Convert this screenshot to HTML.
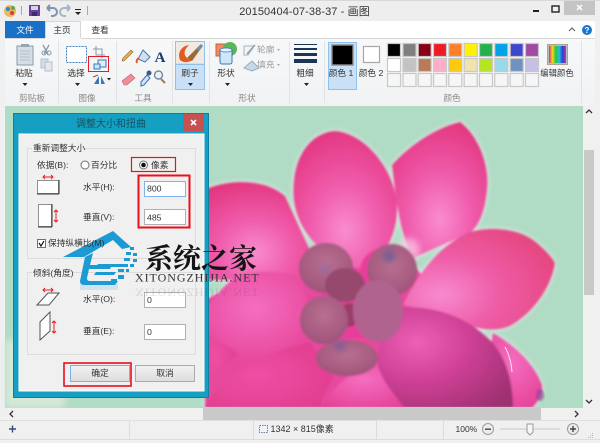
<!DOCTYPE html>
<html lang="zh"><head><meta charset="utf-8"><title>画图</title>
<style>
html,body{margin:0;padding:0;width:600px;height:443px;overflow:hidden;background:#f0f0f0}
svg{display:block;filter:blur(.3px)}
text{font-family:"Liberation Sans","Noto Sans CJK SC",sans-serif;font-size:8.7px;fill:#333}
.m{text-anchor:middle}
.g{fill:#8a8a8a}
.d{fill:#9a9a9a}
</style></head><body>
<svg width="600" height="443" viewBox="0 0 600 443" xmlns="http://www.w3.org/2000/svg">
<defs>
<radialGradient id="pA" cx=".5" cy=".72" r=".75"><stop offset="0" stop-color="#f98ccf"/><stop offset=".45" stop-color="#f05cac"/><stop offset="1" stop-color="#e2367f"/></radialGradient>
<radialGradient id="pB" cx=".25" cy=".65" r=".85"><stop offset="0" stop-color="#f88ad0"/><stop offset=".45" stop-color="#ee5ca6"/><stop offset="1" stop-color="#e4447c"/></radialGradient>
<radialGradient id="pC" cx=".4" cy=".5" r=".7"><stop offset="0" stop-color="#ee4fa4"/><stop offset="1" stop-color="#e03c8e"/></radialGradient>
<radialGradient id="pD" cx=".3" cy=".35" r=".85"><stop offset="0" stop-color="#ec60b6"/><stop offset=".45" stop-color="#cf4096"/><stop offset="1" stop-color="#9c3070"/></radialGradient>
<radialGradient id="pE" cx=".5" cy=".4" r=".8"><stop offset="0" stop-color="#f56ec0"/><stop offset="1" stop-color="#e23b90"/></radialGradient>
<radialGradient id="bud" cx=".5" cy=".4" r=".7"><stop offset="0" stop-color="#b8708f"/><stop offset="1" stop-color="#9c4f78"/></radialGradient>
<linearGradient id="rib" x1="0" y1="0" x2="0" y2="1"><stop offset="0" stop-color="#f7f8f9"/><stop offset="1" stop-color="#f1f2f3"/></linearGradient>
<linearGradient id="btn" x1="0" y1="0" x2="0" y2="1"><stop offset="0" stop-color="#f2f2f2"/><stop offset="1" stop-color="#dcdcdc"/></linearGradient>
<linearGradient id="rb" x1="0" y1="0" x2="1" y2="0"><stop offset="0" stop-color="#e0208c"/><stop offset=".2" stop-color="#e8e020"/><stop offset=".4" stop-color="#30c040"/><stop offset=".6" stop-color="#20c0e0"/><stop offset=".8" stop-color="#3040d0"/><stop offset="1" stop-color="#c030b0"/></linearGradient>
<filter id="glow" x="-20%" y="-20%" width="140%" height="140%"><feGaussianBlur in="SourceAlpha" stdDeviation="2.6"/><feColorMatrix values="0 0 0 0 .93 0 0 0 0 .96 0 0 0 0 .94 0 0 0 .9 0"/></filter>
<filter id="soft" x="-10%" y="-10%" width="120%" height="120%"><feGaussianBlur stdDeviation="1"/></filter>
<filter id="spot" x="-60%" y="-60%" width="220%" height="220%"><feGaussianBlur stdDeviation="3.5"/></filter>
<g id="petals">
<path fill="#e7489c" d="M205 408L205 300L300 250L400 250L470 330L500 408Z"/>
<path fill="url(#pE)" d="M493 333C515 345 535 365 542 385C543 395 538 402 532 408L480 408Z"/>
<path fill="url(#pA)" d="M200 192C225 178 265 178 285 196C294 215 303 235 310 250L300 280L200 280Z"/>
<path fill="url(#pA)" d="M392 165C410 145 435 128 460 122C478 135 490 165 487 190C485 210 480 225 470 233L413 258C400 235 396 200 392 165Z"/>
<path fill="url(#pA)" d="M340 265C305 240 290 215 294 180C297 150 315 132 335 131C365 133 395 170 397 205C398 230 388 250 372 270Z"/>
<path fill="url(#pB)" d="M403 305C420 270 440 245 470 232C490 226 520 228 537 243C545 250 552 257 555 263C552 285 535 312 510 326C490 334 470 328 445 314Z"/>
<path fill="url(#pE)" d="M200 355C225 372 290 360 310 338L304 280C285 270 262 270 240 275C220 285 210 305 200 318Z"/>
<path fill="url(#pC)" d="M205 408C212 385 250 355 310 342L334 378C325 392 320 400 322 408Z"/>
<path fill="url(#pE)" d="M322 408C330 390 350 370 378 360L405 408Z"/>
<path fill="url(#pC)" d="M200 320L210 335C225 345 235 350 238 355C220 365 205 380 200 395Z"/>
<path fill="url(#pD)" d="M377 362C378 340 388 316 403 308C430 305 465 315 490 340C505 355 513 380 513 408L405 408C392 392 380 378 377 362Z"/>
</g>
</defs>

<rect width="600" height="443" fill="#f0f0f0"/>
<!-- canvas -->
<rect x="5" y="106" width="578" height="302" fill="#b0dbc4"/>
<rect x="5" y="340" width="60" height="68" fill="#d5e8d8" filter="url(#spot)"/>
<clipPath id="cv"><rect x="5" y="107" width="577" height="300"/></clipPath>
<g clip-path="url(#cv)">
<use href="#petals" filter="url(#glow)"/>
<use href="#petals" filter="url(#soft)"/>
<path d="M505 347Q511 358 512 372" stroke="#f4e8ee" stroke-width="1" fill="none"/>
<ellipse cx="540" cy="395" rx="4" ry="6" fill="#8c4a9c" opacity=".7" filter="url(#soft)"/>
<circle cx="408" cy="250" r="12" fill="#fbd0ea" opacity=".7" filter="url(#spot)"/>
<g filter="url(#soft)">
<rect x="322" y="278" width="66" height="60" fill="#e83d9a"/>
<ellipse cx="349" cy="315" rx="9" ry="12" fill="#9a3c68"/>
<ellipse cx="326" cy="268" rx="27" ry="25" fill="url(#bud)"/>
<ellipse cx="384" cy="272" rx="24" ry="24" fill="#e83d9a"/>
<ellipse cx="392" cy="270" rx="25" ry="26" fill="url(#bud)"/>
<ellipse cx="345" cy="285" rx="20" ry="17" fill="#96486d"/>
<ellipse cx="324" cy="320" rx="24" ry="24" fill="url(#bud)"/>
<ellipse cx="378" cy="311" rx="25" ry="31" fill="#b0648f"/>
<ellipse cx="347" cy="358" rx="31" ry="18" fill="url(#bud)"/>
</g>
<circle cx="389" cy="256" r="6" fill="#5d5a98" opacity=".8" filter="url(#spot)"/>
<circle cx="325" cy="269" r="5" fill="#8a6aa8" opacity=".7" filter="url(#spot)"/>
<circle cx="340" cy="346" r="5" fill="#6a5a9c" opacity=".8" filter="url(#spot)"/>
</g>

<!-- title bar -->
<rect width="600" height="21" fill="#eeeeee"/>
<rect y="0" width="600" height="1" fill="#d8d8d8"/>
<circle cx="10" cy="11" r="6" fill="#e8b860"/><circle cx="8" cy="9" r="2" fill="#3a80c8"/><circle cx="12" cy="13" r="2" fill="#d04040"/><circle cx="13" cy="8" r="2" fill="#60a850"/>
<rect x="21" y="6" width="1" height="9" fill="#a8a8a8"/>
<rect x="29" y="5" width="11" height="11" fill="#6a3f9f"/><rect x="31" y="6" width="7" height="4" fill="#d8d0e8"/><rect x="32" y="12" width="5" height="4" fill="#3c2a70"/>
<path d="M47 8h6a4 4 0 0 1 0 8h-2M47 8l3-3M47 8l3 3" stroke="#7c93b4" stroke-width="2" fill="none"/>
<path d="M70 8h-6a4 4 0 0 0 0 8h2M70 8l-3-3M70 8l-3 3" stroke="#a6b4c6" stroke-width="2" fill="none"/>
<rect x="75" y="9" width="6" height="1" fill="#222"/><path d="M75 12h6l-3 3z" fill="#222"/>
<rect x="87" y="6" width="1" height="9" fill="#a8a8a8"/>
<text x="304.500" y="15" class="m" style="font-size:11px;letter-spacing:.1px">20150404-07-38-37 - 画图</text>
<rect x="533" y="10" width="6" height="2" fill="#222"/>
<rect x="552" y="6" width="7" height="6" fill="none" stroke="#222" stroke-width="1.4"/>
<rect x="564" y="1" width="31" height="14" fill="#c4c4c4"/>
<path d="M577 5l5 5M582 5l-5 5" stroke="#fff" stroke-width="1.5"/>

<!-- tabs -->
<rect x="5" y="21" width="590" height="17" fill="#fff"/>
<rect x="5" y="21" width="40" height="17" fill="#1a6fc7"/>
<text x="25" y="33" class="m" style="fill:#fff">文件</text>
<rect x="45.500" y="21.500" width="35" height="17" fill="#f6f7f8" stroke="#d6d6d6"/>
<text x="62" y="33" class="m">主页</text>
<text x="100" y="33" class="m">查看</text>
<path d="M569 31l3-3 3 3" stroke="#666" stroke-width="1.2" fill="none"/>
<circle cx="587" cy="30" r="5" fill="#1a74d2"/><text x="587" y="33" class="m" style="fill:#fff;font-size:8px;font-weight:bold">?</text>

<!-- ribbon -->
<rect x="5" y="38" width="590" height="68" fill="url(#rib)"/>
<rect x="5" y="38" width="40" height="1" fill="#d6d6d6"/><rect x="81" y="38" width="514" height="1" fill="#d6d6d6"/>
<g fill="#e2e3e4">
<rect x="58" y="41" width="1" height="62"/><rect x="116" y="41" width="1" height="62"/><rect x="172" y="41" width="1" height="62"/><rect x="209" y="41" width="1" height="62"/><rect x="289" y="41" width="1" height="62"/><rect x="324" y="41" width="1" height="62"/><rect x="581" y="41" width="1" height="62"/>
</g>
<!-- clipboard -->
<rect x="17" y="46" width="16" height="19" fill="#d5dde6" stroke="#8a9aa8"/><rect x="21" y="44" width="8" height="3" fill="#9aa5af"/>
<path d="M20 51h10M20 54h10M20 57h10M20 60h10" stroke="#b4c0cc"/>
<text x="24" y="76" class="m">粘贴</text><path d="M22.500 83h5l-2.500 3z" fill="#222"/>
<path d="M43 45l5 9M49 45l-5 9" stroke="#8a9aa8" stroke-width="1.3"/><circle cx="44" cy="53" r="2" fill="none" stroke="#8a9aa8"/><circle cx="49" cy="53" r="2" fill="none" stroke="#8a9aa8"/>
<rect x="41" y="59" width="7" height="9" fill="#d5dde6" stroke="#b4c0cc"/><rect x="45" y="62" width="7" height="9" fill="#e2e8ee" stroke="#b4c0cc"/>
<text x="32" y="101" class="m g">剪贴板</text>
<!-- select -->
<rect x="66.500" y="46.500" width="20" height="16" fill="#fff" stroke="#4a80b8" stroke-dasharray="2 1"/>
<text x="76" y="76" class="m">选择</text><path d="M75 83h5l-2.500 3z" fill="#222"/>
<path d="M96 46v9h9M93 49h9v9" stroke="#8a9aa8" fill="none"/>
<rect x="88.500" y="56.500" width="20" height="15" fill="none" stroke="#e81c24"/>
<rect x="98" y="60" width="8" height="7" fill="#e0ecf8" stroke="#3a78b8"/><rect x="94" y="64" width="6" height="5" fill="#cfe2f6" stroke="#3a78b8"/>
<path d="M94 84l5-8v8zM101 84v-8l4 8z" fill="#3a78b8"/><path d="M93 77l5-2" stroke="#c04030"/><path d="M107 78h4l-2 2.500z" fill="#222"/>
<text x="87" y="101" class="m g">图像</text>
<!-- tools -->
<path d="M124 61l-2 0 1-3 8-8 2 2z" fill="#e8b040" stroke="#8a6a30" stroke-width=".6"/>
<path d="M143 50l7 7-5 5-7-3z" fill="#cfe0f0" stroke="#4a7ab0"/><path d="M139 58c-2 1-3 3-2 5" stroke="#e05a28" stroke-width="2" fill="none"/>
<text x="160" y="62" class="m" style="font-family:'Liberation Serif',serif;font-size:15px;font-weight:bold;fill:#1c3a68">A</text>
<path d="M122 81l9-7 4 4-8 7h-3z" fill="#ee8f96" stroke="#c06870" stroke-width=".6"/>
<path d="M141 82l6-7 3 3-6 7-3 1z" fill="#cfe4f6" stroke="#3a70a8"/><circle cx="149" cy="73" r="2.500" fill="#3a5a90"/>
<circle cx="158.500" cy="75" r="4" fill="#e8f0f8" stroke="#6a7a8a" stroke-width="1.2"/><path d="M161 79l4 4" stroke="#a08050" stroke-width="2"/>
<text x="143" y="101" class="m g">工具</text>
<!-- brush -->
<rect x="175.500" y="41.500" width="29" height="48" fill="#c9e0f7" stroke="#90c0ec"/>
<rect x="176" y="42" width="28" height="21" fill="#efeae4"/><rect x="176" y="64" width="28" height="1" fill="#90c0ec"/>
<path d="M180 60c-3-8 2-14 9-15-4 4-6 8-3 12 3 4 6 2 8 1-2 4-10 6-14 2z" fill="#e35a24"/>
<path d="M187 58l13-13 2 2-10 14z" fill="#9a6a38"/><path d="M196 49l5-5 2 2-4 5z" fill="#7a8a98"/>
<text x="190" y="76" class="m">刷子</text><path d="M188 83h5l-2.500 3z" fill="#222"/>
<!-- shapes -->
<rect x="216" y="44" width="13" height="12" fill="#f08a60" stroke="#c86040"/><circle cx="230" cy="49" r="7" fill="#58b858"/>
<rect x="220" y="49" width="12" height="15" rx="2" fill="#cfe6fa" stroke="#3a78b8"/><ellipse cx="226" cy="50" rx="6" ry="2" fill="#e9f4fd" stroke="#3a78b8" stroke-width=".7"/>
<text x="226" y="76" class="m">形状</text><path d="M225 83h5l-2.500 3z" fill="#222"/>
<path d="M244 46h9v2l-5 7-4 0v-9z" fill="#f2f4f6" stroke="#a6b4c2"/><path d="M247 54l8-9" stroke="#8aa0b4" stroke-width="1.5"/>
<text x="257" y="52.500" class="d">轮廓</text><path d="M277 49h3l-1.500 2z" fill="#aaa"/>
<path d="M244 68l8-7 7 7-7 3z" fill="#c5d8e8" stroke="#9aacbd"/>
<text x="257" y="67.500" class="d">填充</text><path d="M277 64h3l-1.500 2z" fill="#aaa"/>
<text x="247" y="101" class="m g">形状</text>
<!-- size -->
<g fill="#1c3557"><rect x="294" y="44" width="23" height="1"/><rect x="294" y="48" width="23" height="2"/><rect x="294" y="53" width="23" height="3"/><rect x="294" y="59" width="23" height="4"/></g>
<text x="305" y="76" class="m">粗细</text><path d="M304 83h5l-2.500 3z" fill="#222"/>
<!-- colors -->
<rect x="328.500" y="42.500" width="28" height="47" fill="#c9e0f7" stroke="#90c0ec"/>
<rect x="332" y="45" width="21" height="20" fill="#000" stroke="#8c8c8c" stroke-width="1.4"/>
<text x="341" y="76" class="m">颜色 1</text>
<rect x="363.500" y="46.500" width="16" height="16" fill="#fff" stroke="#a8a8a8" stroke-width="1.200"/>
<text x="371" y="76" class="m">颜色 2</text>
<g stroke="#c8c8c8" stroke-width="1.200">
<rect x="387.500" y="43.500" width="13" height="13" fill="#000"/><rect x="403" y="43.500" width="13" height="13" fill="#7f7f7f"/><rect x="418.200" y="43.500" width="13" height="13" fill="#880015"/><rect x="433.500" y="43.500" width="13" height="13" fill="#ed1c24"/><rect x="448.800" y="43.500" width="13" height="13" fill="#ff7f27"/><rect x="464.200" y="43.500" width="13" height="13" fill="#fff200"/><rect x="479.500" y="43.500" width="13" height="13" fill="#22b14c"/><rect x="494.800" y="43.500" width="13" height="13" fill="#00a2e8"/><rect x="510.200" y="43.500" width="13" height="13" fill="#3f48cc"/><rect x="525.500" y="43.500" width="13" height="13" fill="#a349a4"/>
<rect x="387.500" y="58.500" width="13" height="13" fill="#fff"/><rect x="403" y="58.500" width="13" height="13" fill="#c3c3c3"/><rect x="418.200" y="58.500" width="13" height="13" fill="#b97a57"/><rect x="433.500" y="58.500" width="13" height="13" fill="#ffaec9"/><rect x="448.800" y="58.500" width="13" height="13" fill="#ffc90e"/><rect x="464.200" y="58.500" width="13" height="13" fill="#efe4b0"/><rect x="479.500" y="58.500" width="13" height="13" fill="#b5e61d"/><rect x="494.800" y="58.500" width="13" height="13" fill="#99d9ea"/><rect x="510.200" y="58.500" width="13" height="13" fill="#7092be"/><rect x="525.500" y="58.500" width="13" height="13" fill="#c8bfe7"/>
<g fill="#f6f6f6"><rect x="387.500" y="73.500" width="13" height="13"/><rect x="403" y="73.500" width="13" height="13"/><rect x="418.200" y="73.500" width="13" height="13"/><rect x="433.500" y="73.500" width="13" height="13"/><rect x="448.800" y="73.500" width="13" height="13"/><rect x="464.200" y="73.500" width="13" height="13"/><rect x="479.500" y="73.500" width="13" height="13"/><rect x="494.800" y="73.500" width="13" height="13"/><rect x="510.200" y="73.500" width="13" height="13"/><rect x="525.500" y="73.500" width="13" height="13"/></g>
</g>
<rect x="547.500" y="44.500" width="20" height="20" fill="#bdbdbd" stroke="#b0a090"/><rect x="549" y="46" width="17" height="17" fill="url(#rb)"/>
<text x="557" y="76" class="m" style="font-size:8.400px">编辑颜色</text>
<text x="452" y="101" class="m g">颜色</text>

<!-- scrollbars -->
<rect x="583" y="106" width="12" height="314" fill="#f0f0f0"/>
<path d="M586 113l3-3 3 3M586 400l3 3 3-3" stroke="#333" stroke-width="1.3" fill="none"/>
<rect x="584" y="150" width="10" height="145" fill="#c9c9c9"/>
<rect x="5" y="408" width="590" height="12" fill="#f0f0f0"/>
<rect x="203" y="408" width="338" height="12" fill="#c9c9c9"/>
<path d="M13 411l-3 3 3 3M575 411l3 3-3 3" stroke="#333" stroke-width="1.3" fill="none"/>
<!-- status bar -->
<rect x="0" y="420" width="600" height="23" fill="#f0f0f0"/>
<rect x="0" y="420" width="600" height="1" fill="#e0e0e0"/>
<rect x="0" y="439" width="600" height="1" fill="#dcdcdc"/>
<g fill="#dcdcdc"><rect x="129" y="421" width="1" height="18"/><rect x="253" y="421" width="1" height="18"/><rect x="376" y="421" width="1" height="18"/><rect x="443" y="421" width="1" height="18"/></g>
<path d="M9 429h7M12.500 425.500v7" stroke="#2a5078" stroke-width="1.400"/>
<rect x="259.500" y="425.500" width="8" height="7" fill="#eef4fa" stroke="#6a8098" stroke-dasharray="1.500 1"/>
<text x="270.500" y="432" style="font-size:9px">1342 × 815像素</text>
<text x="455.500" y="432" style="font-size:8.500px">100%</text>
<circle cx="488" cy="429" r="5.500" fill="#ececec" stroke="#9a9a9a"/><rect x="485" y="428.500" width="6" height="1.400" fill="#444"/>
<rect x="500" y="428" width="60" height="2" fill="#dcdcdc"/>
<path d="M527 424h6v8l-3 3-3-3z" fill="#f6f6f6" stroke="#9a9a9a"/>
<circle cx="573" cy="429" r="5.500" fill="#ececec" stroke="#9a9a9a"/><path d="M570 429h6M573 426v6" stroke="#444" stroke-width="1.400"/>
<g fill="#b8b8b8"><rect x="592" y="433" width="1" height="1"/><rect x="590" y="435" width="1" height="1"/><rect x="592" y="435" width="1" height="1"/><rect x="588" y="437" width="1" height="1"/><rect x="590" y="437" width="1" height="1"/><rect x="592" y="437" width="1" height="1"/></g>

<!-- dialog -->
<rect x="13.500" y="113.500" width="195" height="284" fill="#159fc2" stroke="#0e7f9c"/>
<rect x="19" y="134" width="185" height="257" fill="#f0f0f0" stroke="#fff"/>
<text x="111" y="127" class="m" style="font-size:10px;fill:#17505f">调整大小和扭曲</text>
<rect x="183" y="114" width="21" height="17" fill="#c75050"/>
<path d="M191 120l5 5M196 120l-5 5" stroke="#fff" stroke-width="1.6"/>
<!-- group 1 -->
<rect x="27.500" y="148.500" width="168" height="110" fill="none" stroke="#dcdcdc"/>
<rect x="32" y="144" width="52" height="10" fill="#f0f0f0"/>
<text x="33" y="151">重新调整大小</text>
<text x="37" y="168">依据(B):</text>
<circle cx="85" cy="165" r="4" fill="#fff" stroke="#707070"/>
<text x="91" y="168">百分比</text>
<circle cx="143.500" cy="165" r="4" fill="#fff" stroke="#707070"/><circle cx="143.500" cy="165" r="2.300" fill="#111"/>
<text x="151" y="168">像素</text>
<rect x="131.500" y="157.500" width="44" height="14" fill="none" stroke="#e8101c" stroke-width="1.200"/>
<!-- resize icons -->
<rect x="37.500" y="180.500" width="21" height="13" fill="#fff" stroke="#909090"/><path d="M37 194h22M59 180v14" stroke="#333"/>
<path d="M43 177h10M45 175l-2 2 2 2M51 175l2 2-2 2" stroke="#e81c24" fill="none"/>
<rect x="38.500" y="204.500" width="13" height="22" fill="#fff" stroke="#909090"/><path d="M38 227h14M52 204v23" stroke="#333"/>
<path d="M56 210v12M54 212l2-2 2 2M54 220l2 2 2-2" stroke="#e81c24" fill="none"/>
<text x="83" y="190">水平(H):</text>
<text x="83" y="220">垂直(V):</text>
<rect x="144.500" y="181.500" width="41" height="15" fill="#fff" stroke="#7eb4ea"/>
<text x="147" y="191.500">800</text>
<rect x="144.500" y="209.500" width="41" height="15" fill="#fff" stroke="#b0b0b0"/>
<text x="147" y="220.500">485</text>
<rect x="138.500" y="175.500" width="51" height="52" fill="none" stroke="#e8101c" stroke-width="2"/>
<rect x="37.500" y="239.500" width="8" height="8" fill="#fff" stroke="#707070"/>
<path d="M39 243l2 3 3-5" stroke="#111" stroke-width="1.200" fill="none"/>
<!-- group 2 -->
<rect x="27.500" y="272.500" width="168" height="82" fill="none" stroke="#dcdcdc"/>
<rect x="32" y="268" width="40" height="10" fill="#f0f0f0"/>
<text x="33" y="276">倾斜(角度)</text>
<path d="M37 305l11-12h11l-10 12z" fill="#fff" stroke="#555"/>
<path d="M43 290h10M45 288l-2 2 2 2M51 288l2 2-2 2" stroke="#e81c24" fill="none"/>
<path d="M40 340v-18l10-10v19z" fill="#fff" stroke="#555"/>
<path d="M54 321v12M52 323l2-2 2 2M52 331l2 2 2-2" stroke="#e81c24" fill="none"/>
<text x="83" y="302">水平(O):</text>
<text x="83" y="334">垂直(E):</text>
<rect x="144.500" y="292.500" width="41" height="15" fill="#fff" stroke="#b0b0b0"/>
<text x="147" y="303">0</text>
<rect x="144.500" y="324.500" width="41" height="15" fill="#fff" stroke="#b0b0b0"/>
<text x="147" y="335">0</text>
<!-- buttons -->
<rect x="70.500" y="365.500" width="59" height="16" fill="url(#btn)" stroke="#78b4ea"/>
<text x="100" y="376" class="m">确定</text>
<rect x="135.500" y="365.500" width="59" height="16" fill="url(#btn)" stroke="#acacac"/>
<text x="165" y="376" class="m">取消</text>
<rect x="64" y="363" width="67" height="23" fill="none" stroke="#e8101c" stroke-width="1.600"/>

<!-- watermark -->
<g fill="#1c9ad4">
<path d="M63 257L113 231L131 247L122 249L113 240L84 257Z"/>
<path d="M85 257l8-4-3 12h22l-2 4H89l-2 9c0 2 1 3 3 3h28l-3 4H84c-3 0-4-2-4-4z"/>
<path d="M98 264h26l-2 3H96zM96 272h20l-2 3H94z"/>
<rect x="130" y="247" width="4" height="3"/><rect x="126" y="252" width="5" height="3"/><rect x="133" y="253" width="4" height="3"/><rect x="124" y="258" width="6" height="3"/><rect x="133" y="259" width="4" height="3"/><rect x="122" y="264" width="6" height="3"/><rect x="130" y="264" width="4" height="3"/><rect x="118" y="269" width="6" height="3"/><rect x="126" y="269" width="3" height="3"/>
<rect x="118" y="275" width="6" height="4"/><rect x="111" y="279" width="6" height="4"/>
</g>
<text x="48" y="246">保持纵横比(M)</text>
<text x="145" y="268" style="font-family:'Noto Serif CJK SC','Liberation Serif',serif;font-size:28px;font-weight:bold;fill:#141414">系统之家</text>
<text x="135" y="281.500" style="font-family:'Liberation Serif',serif;font-size:12px;letter-spacing:.95px;fill:#333">XITONGZHIJIA.NET</text>
<g transform="translate(0,570) scale(1,-1)" opacity=".14"><text x="135" y="281.500" style="font-family:'Liberation Serif',serif;font-size:12px;letter-spacing:.95px;fill:#333">XITONGZHIJIA.NET</text></g>
<rect x="80" y="284" width="38" height="6" fill="#1c9ad4" opacity=".15"/>
</svg>
</body></html>
